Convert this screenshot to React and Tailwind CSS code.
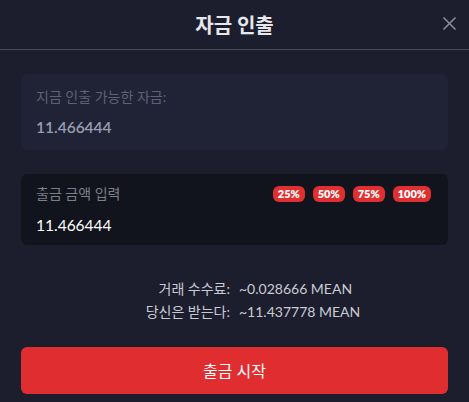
import React, { useState } from 'react';

const FONT = { fontFamily: 'Lato, "Noto Sans CJK KR", sans-serif' };

export default function App() {
  const [amount, setAmount] = useState('11.466444');
  const available = '11.466444';

  return (
    <div className="w-[469px] h-[402px] bg-[#1c1e2e] text-white overflow-hidden" style={FONT}>
      <div className="relative h-[50px] flex items-center justify-center border-b border-[#4a4c5b]">
        <h1 className="text-[20px] font-bold text-[#e6e7eb]">자금 인출</h1>
        <button className="absolute right-[12px] top-[16px] text-[#8a8c98]">
          <svg width="15" height="15" viewBox="0 0 15 15" fill="none" stroke="currentColor" strokeWidth="1.6">
            <path d="M1.5 1.5 L13.5 13.5 M13.5 1.5 L1.5 13.5" />
          </svg>
        </button>
      </div>

      <div className="px-[21px] pt-[24px]">
        <div className="rounded-md bg-[#202336] px-[15px] pt-[12px] h-[76px]">
          <p className="text-[14px] text-[#5e6172]">지금 인출 가능한 자금:</p>
          <p className="mt-[9px] text-[15.5px] font-semibold text-[#9a9daf]">{available}</p>
        </div>

        <div className="mt-[24px] rounded-md bg-[#12141d] pl-[15px] pr-[17px] pt-[9px] h-[71px]">
          <div className="flex items-center justify-between">
            <span className="text-[14px] text-[#7c7f8b]">출금 금액 입력</span>
            <div className="flex gap-[8px]">
              {['25%', '50%', '75%', '100%'].map((p) => (
                <button
                  key={p}
                  className="h-[16px] px-[5px] rounded-[6px] bg-[#e02f31] text-[11px] font-extrabold leading-none text-white"
                >
                  {p}
                </button>
              ))}
            </div>
          </div>
          <input
            value={amount}
            onChange={(e) => setAmount(e.target.value)}
            className="mt-[10px] w-full bg-transparent text-[15.5px] text-white outline-none"
            style={FONT}
          />
        </div>

        <div className="mt-[33px] grid grid-cols-[1fr_1fr] gap-x-[9px] gap-y-[2px] text-[14px] text-[#c9cbd4]">
          <span className="text-right">거래 수수료:</span>
          <span>~0.028666 MEAN</span>
          <span className="text-right">당신은 받는다:</span>
          <span>~11.437778 MEAN</span>
        </div>

        <button className="mt-[25px] w-full h-[47px] rounded-md bg-[#e02d2f] text-[16px] font-normal text-white">
          출금 시작
        </button>
      </div>
    </div>
  );
}
